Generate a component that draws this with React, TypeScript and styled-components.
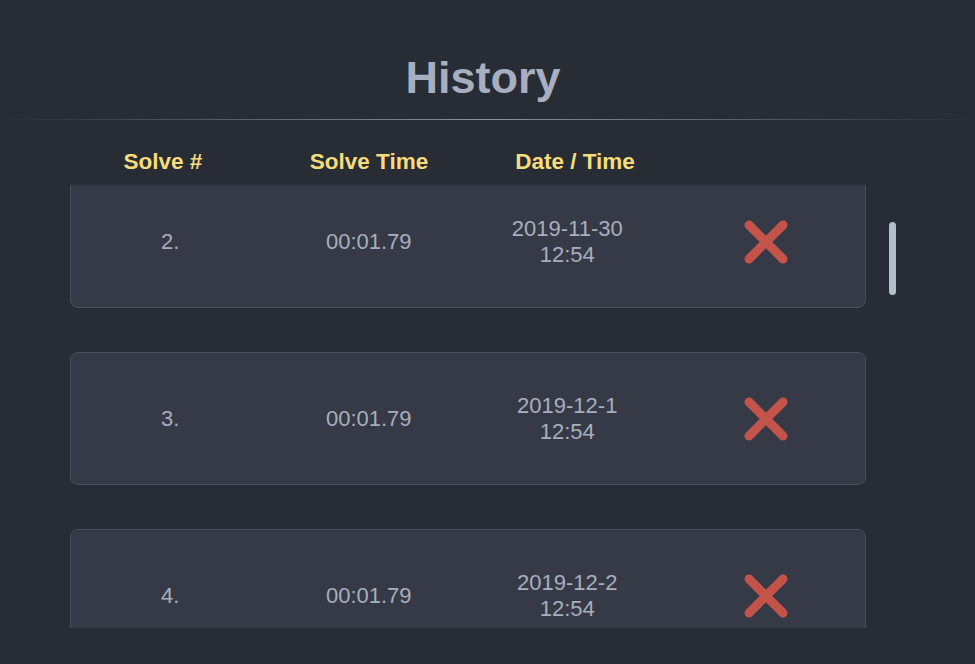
import React from "react";
import styled, { createGlobalStyle } from "styled-components";

const Global = createGlobalStyle`
  html, body { margin: 0; padding: 0; background: #282c35; }
  body { font-family: "Liberation Sans", Arial, sans-serif; overflow: hidden; }
`;

const Page = styled.div`
  width: 975px;
  height: 664px;
  background: #282c35;
  display: flex;
  flex-direction: column;
`;

const Title = styled.h1`
  margin: 0;
  padding: 51px 9px 0 0;
  height: 54px;
  line-height: 54px;
  text-align: center;
  font-size: 45px;
  font-weight: 700;
  color: #a7aebf;
`;

const Divider = styled.div`
  margin-top: 14px;
  height: 1px;
  background: linear-gradient(90deg, rgba(140,145,158,0) 0%, #8d929e 50%, rgba(140,145,158,0) 100%);
`;

const HeaderRow = styled.div`
  display: grid;
  grid-template-columns: repeat(4, 206px);
  padding-left: 60px;
  margin-top: 29px;
  height: 36px;
  line-height: 26px;
`;

const HeaderCell = styled.div`
  text-align: center;
  font-size: 22.5px;
  font-weight: 700;
  color: #f6dc7a;
`;

const ListArea = styled.div`
  position: relative;
  height: 443px;
  overflow: hidden;
  padding: 0 109px 0 70px;
`;

const Track = styled.div`
  display: flex;
  flex-direction: column;
  gap: 44px;
  margin-top: -10px;
`;

const Card = styled.div`
  height: 131px;
  box-sizing: content-box;
  background: #363a47;
  border: 1px solid #4a4f5e;
  border-radius: 8px;
  display: grid;
  grid-template-columns: repeat(4, 1fr);
  align-items: center;
`;

const Cell = styled.div`
  text-align: center;
  font-size: 22px;
  line-height: 26px;
  color: #a8aebb;
`;

const DeleteButton = styled.button`
  justify-self: center;
  background: none;
  border: none;
  padding: 0;
  width: 48px;
  height: 48px;
  cursor: pointer;
  display: flex;
  align-items: center;
  justify-content: center;
`;

const Thumb = styled.div`
  position: absolute;
  left: 889px;
  top: 37px;
  width: 7px;
  height: 73px;
  border-radius: 4px;
  background: #b5bccb;
`;

const CrossIcon = () => (
  <svg width="48" height="48" viewBox="0 0 48 48">
    <g stroke="#c4544a" strokeWidth="9" strokeLinecap="round">
      <line x1="7" y1="7" x2="41" y2="41" />
      <line x1="41" y1="7" x2="7" y2="41" />
    </g>
  </svg>
);

const rows = [
  { n: "2.", t: "00:01.79", d: "2019-11-30", h: "12:54" },
  { n: "3.", t: "00:01.79", d: "2019-12-1", h: "12:54" },
  { n: "4.", t: "00:01.79", d: "2019-12-2", h: "12:54" },
];

export default function App() {
  return (
    <Page>
      <Global />
      <Title>History</Title>
      <Divider />
      <HeaderRow>
        <HeaderCell>Solve #</HeaderCell>
        <HeaderCell>Solve Time</HeaderCell>
        <HeaderCell>Date / Time</HeaderCell>
        <HeaderCell />
      </HeaderRow>
      <ListArea>
        <Track>
          {rows.map((r) => (
            <Card key={r.n}>
              <Cell>{r.n}</Cell>
              <Cell>{r.t}</Cell>
              <Cell>
                {r.d}
                <br />
                {r.h}
              </Cell>
              <DeleteButton aria-label="delete">
                <CrossIcon />
              </DeleteButton>
            </Card>
          ))}
        </Track>
        <Thumb />
      </ListArea>
    </Page>
  );
}
